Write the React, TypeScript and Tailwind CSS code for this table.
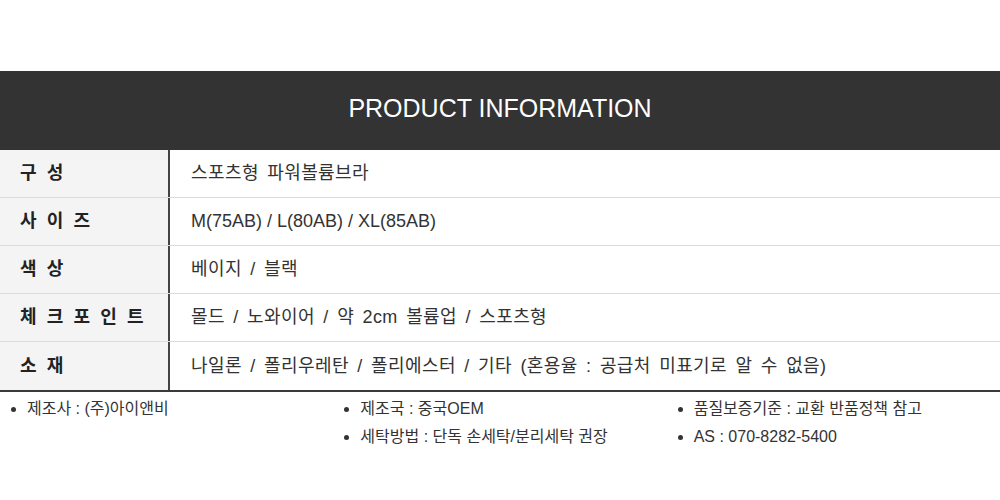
import { type JSX } from "react";

const rows: [string, string][] = [
  ["구 성", "스포츠형 파워볼륨브라"],
  ["사 이 즈", "M(75AB) / L(80AB) / XL(85AB)"],
  ["색 상", "베이지 / 블랙"],
  ["체 크 포 인 트", "몰드 / 노와이어 / 약 2cm 볼륨업 / 스포츠형"],
  ["소 재", "나일론 / 폴리우레탄 / 폴리에스터 / 기타 (혼용율 : 공급처 미표기로 알 수 없음)"],
];

const notes: string[][] = [
  ["제조사 : (주)아이앤비"],
  ["제조국 : 중국OEM", "세탁방법 : 단독 손세탁/분리세탁 권장"],
  ["품질보증기준 : 교환 반품정책 참고", "AS : 070-8282-5400"],
];

const font = { fontFamily: '"Liberation Sans", "Noto Sans CJK KR", sans-serif' };

export default function App(): JSX.Element {
  return (
    <div className="h-[500px] w-[1000px] bg-white text-[#333]" style={font}>
      <div className="h-[71px]" />
      <h1 className="flex h-[79px] items-center justify-center bg-[#333] pb-[4px] text-[25px] text-white">
        PRODUCT INFORMATION
      </h1>

      <div className="border-b-2 border-[#3a3a3a]">
        {rows.map(([label, value], i) => (
          <div
            key={label}
            className={`flex h-[48px] ${i < rows.length - 1 ? "border-b border-[#dcdcdc]" : ""}`}
          >
            <div className="flex w-[170px] items-center border-r-2 border-[#444] bg-[#f4f4f4] pl-[20px] text-[18px] font-bold tracking-[2.6px] text-[#222]">
              {label}
            </div>
            <div
              className={`flex flex-1 items-center pl-[21px] text-[18px] ${
                i === 1 ? "" : "tracking-[0.4px] [word-spacing:3px]"
              }`}
            >
              {value}
            </div>
          </div>
        ))}
      </div>

      <div className="grid grid-cols-3 pt-[3px] text-[16px]">
        {notes.map((col, i) => (
          <ul key={i} className="flex flex-col">
            {col.map((t) => (
              <li key={t} className="flex h-[28px] items-center pl-[11px]">
                <span className="flex w-[16px] items-center">
                  <span className="h-[5px] w-[5px] rounded-full bg-[#333]" />
                </span>
                {t}
              </li>
            ))}
          </ul>
        ))}
      </div>
    </div>
  );
}
